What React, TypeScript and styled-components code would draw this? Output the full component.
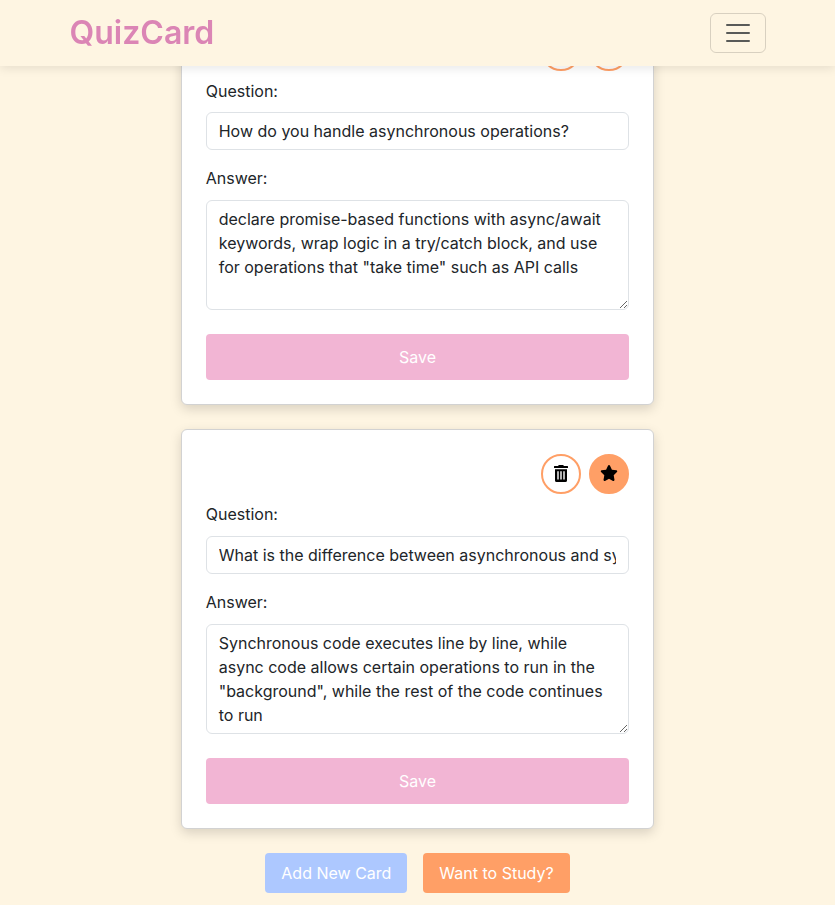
import React from "react";
import styled, { createGlobalStyle } from "styled-components";
import { FaStar } from "react-icons/fa6";

const GlobalStyle = createGlobalStyle`
  *, *::before, *::after { box-sizing: border-box; }
  html { overflow: hidden; }
  body {
    margin: 0;
    background: #fef5e2;
    color: #212529;
    font-family: Inter, "Liberation Sans", sans-serif;
    font-size: 16px;
    line-height: 24px;
  }
`;

const Navbar = styled.nav`
  position: fixed;
  top: 0;
  left: 0;
  right: 0;
  z-index: 10;
  height: 66px;
  padding: 0 69px 0 69.5px;
  display: flex;
  align-items: center;
  justify-content: space-between;
  background: #fef5e2;
  box-shadow: 0 2px 10px rgba(0, 0, 0, 0.1);
`;

const Brand = styled.a`
  color: #db85b5;
  font-size: 32px;
  font-weight: 600;
  line-height: 48px;
`;

const Toggler = styled.button`
  display: flex;
  align-items: center;
  justify-content: center;
  width: 56px;
  height: 40px;
  padding: 0;
  border: 1px solid rgba(0, 0, 0, 0.15);
  border-radius: 6px;
  background: transparent;
`;

const Main = styled.main`
  display: flex;
  flex-direction: column;
  align-items: center;
  gap: 24px;
  padding: 5.5px 0 12px;
`;

const Card = styled.section`
  width: 473.6px;
  padding: 24px;
  background: #fff;
  border: 1px solid #d2d2d2;
  border-radius: 6px;
  box-shadow: 0 4px 12px rgba(0, 0, 0, 0.15);
`;

const CardActions = styled.div`
  display: flex;
  justify-content: flex-end;
  gap: 8px;
  margin-bottom: 8px;
`;

const RoundButton = styled.button<{ $filled?: boolean }>`
  display: flex;
  align-items: center;
  justify-content: center;
  width: 40px;
  height: 40px;
  padding: 0 0 2px;
  border: 2px solid #ff9f66;
  border-radius: 50%;
  background: ${(p) => (p.$filled ? "#ff9f66" : "transparent")};
  color: #000;
`;

const Label = styled.label`
  display: block;
  margin-bottom: 9.75px;
`;

const Input = styled.input`
  display: block;
  width: 100%;
  height: 38px;
  margin: 0 0 16px;
  padding: 6px 12px;
  border: 1px solid #dee2e6;
  border-radius: 6px;
  background: #fff;
  color: #212529;
  font: inherit;
`;

const TextArea = styled.textarea`
  display: block;
  width: 100%;
  height: 110px;
  margin: 0 0 24px;
  padding: 6px 12px;
  border: 1px solid #dee2e6;
  border-radius: 6px;
  background: #fff;
  color: #212529;
  font: inherit;
  resize: vertical;
`;

const Button = styled.button<{ $color: string }>`
  height: 40px;
  padding: 0 16px;
  border: 0;
  border-radius: 4px;
  background: ${(p) => p.$color};
  color: #fff;
  font: inherit;
`;

const SaveButton = styled(Button)`
  display: block;
  width: 100%;
  height: 46px;
`;

const Footer = styled.div`
  display: flex;
  gap: 16px;
`;

function TrashIcon() {
  return (
    <svg width="14" height="18" viewBox="0 0 14 18" fill="currentColor">
      <path d="M4 2 4.900.900h4.200L10 2h3.500a.5.5 0 0 1 .5.5V4H0V2.500a.5.5 0 0 1 .5-.5z" />
      <path
        fillRule="evenodd"
        d="M1 5.300h12v11.100a1.600 1.600 0 0 1-1.600 1.600H2.600A1.600 1.600 0 0 1 1 16.400zM3.300 7.200v8.300h1.400V7.200zM6.300 7.200v8.300h1.400V7.200zM9.300 7.200v8.300h1.400V7.200z"
      />
    </svg>
  );
}

type QuizCard = { question: string; answer: string; starred: boolean };

const cards: QuizCard[] = [
  {
    question: "How do you handle asynchronous operations?",
    answer:
      'declare promise-based functions with async/await keywords, wrap logic in a try/catch block, and use for operations that "take time" such as API calls',
    starred: false,
  },
  {
    question:
      "What is the difference between asynchronous and synchronous code?",
    answer:
      'Synchronous code executes line by line, while async code allows certain operations to run in the "background", while the rest of the code continues to run',
    starred: true,
  },
];

export default function App() {
  return (
    <>
      <GlobalStyle />
      <Navbar>
        <Brand>QuizCard</Brand>
        <Toggler aria-label="Toggle navigation">
          <svg width="30" height="30" viewBox="0 0 30 30">
            <path
              stroke="rgba(33,37,41,.75)"
              strokeLinecap="round"
              strokeMiterlimit="10"
              strokeWidth="2"
              d="M4 7h22M4 15h22M4 23h22"
            />
          </svg>
        </Toggler>
      </Navbar>
      <Main>
        {cards.map((card) => (
          <Card key={card.question}>
            <CardActions>
              <RoundButton aria-label="Delete card">
                <TrashIcon />
              </RoundButton>
              <RoundButton $filled={card.starred} aria-label="Star card">
                <FaStar size={18} />
              </RoundButton>
            </CardActions>
            <Label>Question:</Label>
            <Input defaultValue={card.question} />
            <Label>Answer:</Label>
            <TextArea defaultValue={card.answer} />
            <SaveButton $color="#f2b5d4">Save</SaveButton>
          </Card>
        ))}
        <Footer>
          <Button $color="#adc8ff">Add New Card</Button>
          <Button $color="#ff9f66">Want to Study?</Button>
        </Footer>
      </Main>
    </>
  );
}
